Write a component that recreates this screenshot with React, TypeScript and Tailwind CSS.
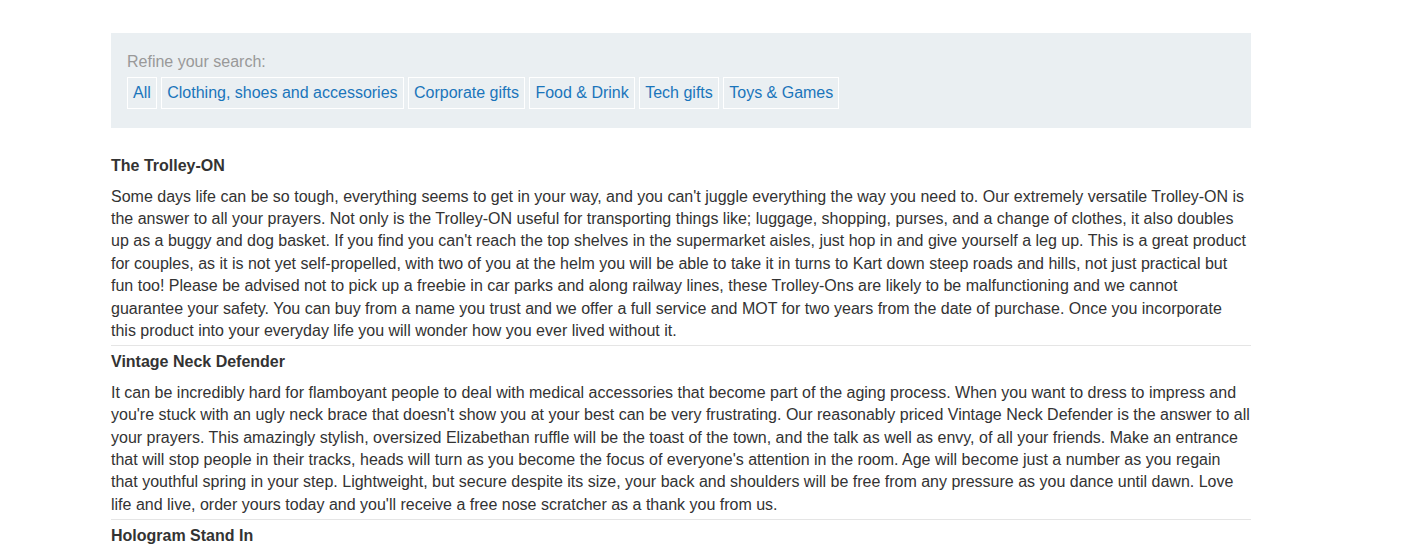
import React from "react";

const cats = ["All", "Clothing, shoes and accessories", "Corporate gifts", "Food & Drink", "Tech gifts", "Toys & Games"];

const items = [
  {
    title: "The Trolley-ON",
    text: "Some days life can be so tough, everything seems to get in your way, and you can't juggle everything the way you need to. Our extremely versatile Trolley-ON is the answer to all your prayers. Not only is the Trolley-ON useful for transporting things like; luggage, shopping, purses, and a change of clothes, it also doubles up as a buggy and dog basket. If you find you can't reach the top shelves in the supermarket aisles, just hop in and give yourself a leg up. This is a great product for couples, as it is not yet self-propelled, with two of you at the helm you will be able to take it in turns to Kart down steep roads and hills, not just practical but fun too! Please be advised not to pick up a freebie in car parks and along railway lines, these Trolley-Ons are likely to be malfunctioning and we cannot guarantee your safety. You can buy from a name you trust and we offer a full service and MOT for two years from the date of purchase. Once you incorporate this product into your everyday life you will wonder how you ever lived without it.",
  },
  {
    title: "Vintage Neck Defender",
    text: "It can be incredibly hard for flamboyant people to deal with medical accessories that become part of the aging process. When you want to dress to impress and you're stuck with an ugly neck brace that doesn't show you at your best can be very frustrating. Our reasonably priced Vintage Neck Defender is the answer to all your prayers. This amazingly stylish, oversized Elizabethan ruffle will be the toast of the town, and the talk as well as envy, of all your friends. Make an entrance that will stop people in their tracks, heads will turn as you become the focus of everyone's attention in the room. Age will become just a number as you regain that youthful spring in your step. Lightweight, but secure despite its size, your back and shoulders will be free from any pressure as you dance until dawn. Love life and live, order yours today and you'll receive a free nose scratcher as a thank you from us.",
  },
  {
    title: "Hologram Stand In",
    text: "Do you ever wish you could be in two places at once? With our Hologram Stand In you can send a life-like projection of yourself to meetings, parties and family gatherings while you stay at home.",
  },
];

export default function App() {
  return (
    <div className="bg-white min-h-screen text-[16px] text-[#333333]" style={{ fontFamily: '"Liberation Sans", Arial, sans-serif' }}>
      <div className="w-[1140px] ml-[111px] pt-[33px]">
        <div className="bg-[#eaeff2] pl-[16px] pr-[16px] pt-[18px] pb-[19px]">
          <div className="text-[#999999] leading-[22px] mb-[4px]">Refine your search:</div>
          <div className="flex flex-wrap gap-[4.45px]">
            {cats.map((c) => (
              <a key={c} href="#" className="h-[32px] px-[5px] flex items-center border border-white text-[#1a75bb] leading-[18px]">
                {c}
              </a>
            ))}
          </div>
        </div>
        <div className="mt-[22px]">
          {items.map((it) => (
            <div key={it.title} className="pt-[5px] pb-[3px] border-b border-[#e5e5e5]">
              <h3 className="font-bold leading-[22px] mb-[8.5px]">{it.title}</h3>
              <p className="leading-[22.4px]">{it.text}</p>
            </div>
          ))}
        </div>
      </div>
    </div>
  );
}
